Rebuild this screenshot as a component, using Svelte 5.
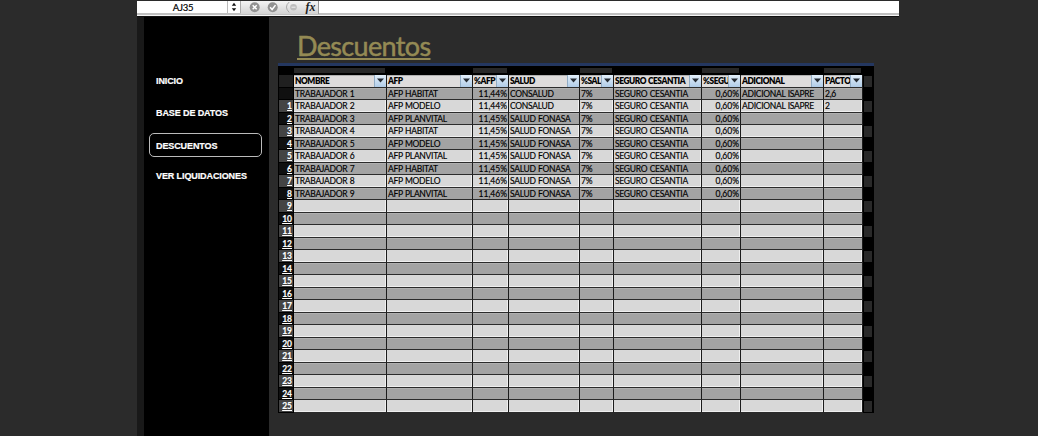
<script>
  const columns = [
    { title: 'NOMBRE', tab: true },
    { title: 'AFP' },
    { title: '%AFP', tab: true, right: true },
    { title: 'SALUD' },
    { title: '%SAL', tab: true },
    { title: 'SEGURO CESANTIA' },
    { title: '%SEGU', tab: true, right: true },
    { title: 'ADICIONAL' },
    { title: 'PACTO', tab: true }
  ];
  const afps = [
    ['HABITAT', '11,44%'], ['MODELO', '11,44%'], ['PLANVITAL', '11,45%'],
    ['HABITAT', '11,45%'], ['MODELO', '11,45%'], ['PLANVITAL', '11,45%'],
    ['HABITAT', '11,45%'], ['MODELO', '11,46%'], ['PLANVITAL', '11,46%']
  ];
  const rows = Array.from({ length: 26 }, (_, i) => {
    const a = afps[i];
    if (!a) return Array(9).fill('');
    return [
      `TRABAJADOR ${i + 1}`, `AFP ${a[0]}`, a[1], i < 2 ? 'CONSALUD' : 'SALUD FONASA', '7%',
      'SEGURO CESANTIA', '0,60%', i < 2 ? 'ADICIONAL ISAPRE' : '', ['2,6', '2'][i] ?? ''
    ];
  });
  const menu = ['INICIO', 'BASE DE DATOS', 'DESCUENTOS', 'VER LIQUIDACIONES'];
</script>

<div class="page">
  <div class="formula">
    <div class="name">AJ35</div>
    <div class="spin">
      <svg width="6" height="10" viewBox="0 0 6 10"><path d="M.8 3.7 3 .8l2.2 2.9zM.8 6.3 3 9.2l2.2-2.9z" fill="#111" /></svg>
    </div>
    <div class="tools">
      <svg width="76" height="12" viewBox="0 0 76 12">
        <circle cx="13.7" cy="6.3" r="5" fill="#929292" />
        <path d="m11.7 4.3 4 4m0-4-4 4" stroke="#fff" stroke-width="1.5" />
        <circle cx="31.7" cy="6.3" r="5" fill="#929292" />
        <path d="m29.1 6.3 2 2.2 3.4-4.4" fill="none" stroke="#fff" stroke-width="1.5" />
        <path d="M48.2 1q-5.5 5 0 10.4" fill="none" stroke="#999" stroke-width=".8" />
        <circle cx="52.5" cy="6.2" r="3.3" fill="#bdbdbd" />
        <path d="M50.5 6.2h4" stroke="#eee" />
      </svg>
      <span class="fx">fx</span>
    </div>
    <div class="entry"></div>
  </div>
  <div class="body">
    <nav>
      {#each menu as item}
        <a class:active={item === 'DESCUENTOS'}>{item}</a>
      {/each}
    </nav>
    <main>
      <h1>Descuentos</h1>
      <div class="sheet">
        <div class="line tabs">
          <span></span>
          {#each columns as c}<span class:tab={c.tab}></span>{/each}
        </div>
        <div class="line head">
          <span class="num"></span>
          {#each columns as c}
            <span class="cell"><b>{c.title}</b><i><svg width="7" height="5" viewBox="0 0 7 5"><path d="M0 .5h7L3.5 4.5z" fill="#252b33" /></svg></i></span>
          {/each}
          <span class="edge on"></span>
        </div>
        {#each rows as row, r}
          <div class="line" class:light={r % 2 === 1}>
            <span class="num"><u>{r || ''}</u></span>
            {#each row as value, c}
              <span class="cell" class:right={columns[c].right}>{value}</span>
            {/each}
            <span class="edge" class:on={r % 2 === 1}></span>
          </div>
        {/each}
      </div>
    </main>
  </div>
</div>

<style>
  :global(body) { margin: 0; background: #2b2b2b; }
  .page { width: 762px; height: 436px; margin-left: 137px; padding-top: 1px; box-sizing: border-box; overflow: hidden; display: flex; flex-direction: column; }
  .formula { height: 16px; flex: none; box-sizing: border-box; display: flex; background: #fff; border-bottom: 1px solid #111; box-shadow: inset 0 -1px #f5f5f5, inset 0 -3px #c0c0c0; }
  .name { width: 90px; height: 12px; padding-left: 2px; box-sizing: border-box; text-align: center; font: 9.5px/13px Lato, sans-serif; letter-spacing: -.3px; color: #000; -webkit-text-stroke: .2px #000; }
  .spin { width: 14px; height: 12px; border-left: 1px solid #bbb; border-right: 1px solid #aaa; display: flex; justify-content: center; align-items: center; box-sizing: border-box; }
  .tools { width: 78px; height: 13px; display: flex; background: linear-gradient(#f4f4f4, #d3d3d3); border-right: 1px solid #999; box-sizing: border-box; }
  .tools svg { flex: none; width: 76px; margin-right: -11.5px; }
  .fx { font: italic bold 12px/12px "Liberation Serif", serif; color: #222; }
  .body { flex: 1; display: flex; min-height: 0; }
  nav { width: 125px; box-sizing: border-box; margin-left: 7px; background: #000; box-shadow: -7px 0 #191919; padding: 52px 0 0 5px; }
  nav a { display: block; box-sizing: border-box; width: 113px; height: 25px; padding-left: 7px; margin-bottom: 7px; color: #fff; font: bold 9px/25px "Liberation Sans", sans-serif; letter-spacing: -.1px; -webkit-text-stroke: .2px #fff; white-space: nowrap; }
  nav a.active { border: 1px solid #bbb; border-radius: 5px; padding-left: 6px; line-height: 25px; height: 24px; }
  main { flex: 1; padding-left: 9px; }
  h1 { margin: 0 0 0 19px; height: 46px; font: 400 27px/58px Lato, sans-serif; letter-spacing: -.65px; -webkit-text-stroke: .5px #948a54; color: #948a54; text-decoration: underline; text-decoration-thickness: 1.5px; text-underline-offset: 1.5px; }
  .sheet { width: 596px; box-sizing: border-box; background: #000; border-top: 3px solid #243760; height: 350px; }
  .line { display: grid; grid-template-columns: 16px 93px 86px 36px 71px 34px 88px 39px 83px 39px 11px; grid-template-rows: 100%; height: 12.52px; font: 8.5px/13px Lato, sans-serif; letter-spacing: -.28px; word-spacing: .5px; color: #000; -webkit-text-stroke: .15px; }
  .tabs { height: 9px; }
  .tab { background: #282828; margin: 2px 2px 0 0; height: 5px; }
  .cell { background: #a3a3a3; border-right: 1px solid #1c1c1c; border-bottom: 1px solid #2b2b2b; padding: 0 1px; white-space: nowrap; overflow: hidden; box-sizing: border-box; box-shadow: inset 0 1px #b0b0b0; }
  .light .cell { background: #d8d8d8; box-shadow: inset -1px -1px #efefef; }
  .cell.right { text-align: right; letter-spacing: 0; padding-right: 1px; }
  .head .cell { background: #dedcdc; display: flex; justify-content: space-between; padding-right: 0; }
  .head b { font-weight: 800; font-size: 8.3px; line-height: 12px; letter-spacing: -.42px; min-width: 0; -webkit-text-stroke: 0; }
  .head i { width: 11px; margin-left: -1px; flex: none; display: flex; align-items: center; justify-content: center; background: linear-gradient(#e3effa, #b0cce8); border: 0 solid #91acc5; border-left-width: 1px; }
  .num { background: #101010; border: 1px solid #000; border-width: 0 1px 1px; box-sizing: border-box; color: #fff; text-align: right; padding-right: 1px; font-weight: 700; letter-spacing: 0; }
  .num u { text-underline-offset: 1px; }
  .light .num { background: #444; }
  .head .num { background: #202020; }
  .edge.on { background: #292929; margin: 1px 2px 1px 1px; }
</style>
